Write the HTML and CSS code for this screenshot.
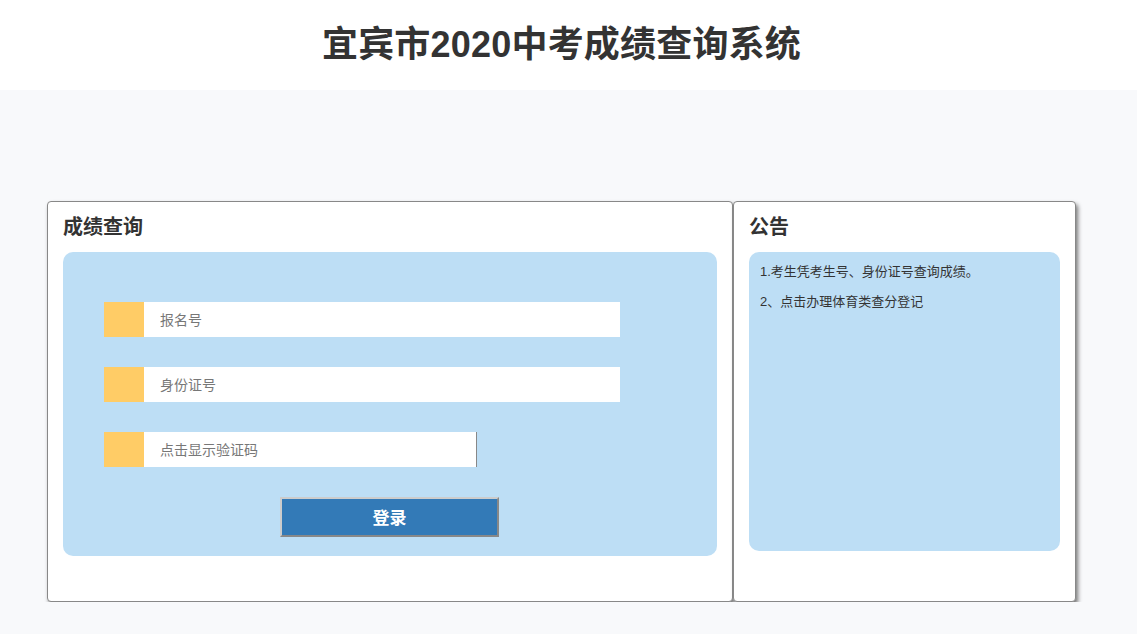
FILE: index.html
```html
<!DOCTYPE html>
<html lang="zh-CN">
<head>
    <meta charset="UTF-8">
    <title>宜宾市2020中考成绩查询系统</title>
    <link rel="stylesheet" href="styles.css">
</head>
<body>

<div class="header">
    <h1>宜宾市2020中考成绩查询系统</h1>
</div>

<div class="main">
    <div class="box box-query">
        <h2>成绩查询</h2>
        <div class="panel">
            <div class="field">
                <span class="mark"></span>
                <input type="text" placeholder="报名号">
            </div>
            <div class="field">
                <span class="mark"></span>
                <input type="text" placeholder="身份证号">
            </div>
            <div class="field">
                <span class="mark"></span>
                <input type="text" class="short" placeholder="点击显示验证码">
            </div>
            <div class="actions">
                <button type="button" class="btn-login">登录</button>
            </div>
        </div>
    </div>

    <div class="box box-notice">
        <h2>公告</h2>
        <div class="panel notice">
            <p>1.考生凭考生号、身份证号查询成绩。</p>
            <p>2、点击办理体育类查分登记</p>
        </div>
    </div>
</div>

</body>
</html>
```

FILE: styles.css
```css
* {
    box-sizing: border-box;
    margin: 0;
    padding: 0;
}
body {
    font-family: "Liberation Sans", "Noto Sans CJK SC", sans-serif;
    background: #f8f9fb;
    color: #333;
}
.header {
    background: #fff;
    height: 90px;
    display: flex;
    align-items: center;
    justify-content: center;
    padding-right: 14px;
}
.header h1 {
    font-size: 36px;
    font-weight: bold;
    letter-spacing: 0.2px;
    color: #333;
    margin-top: -8px;
}
.main {
    display: flex;
    padding: 111px 0 0 47px;
}
.box {
    background: #fff;
    border: 1px solid #888;
    border-radius: 4px;
    box-shadow: 2px 3px 4px #777;
    height: 401px;
    padding: 12px 15px 0;
}
.box h2 {
    font-size: 20px;
    font-weight: bold;
    line-height: 26px;
    margin-bottom: 12px;
}
.box-query {
    width: 686px;
}
.box-notice {
    width: 343px;
}
.panel {
    background: #bddef5;
    border-radius: 10px;
}
.box-query .panel {
    height: 304px;
    padding: 50px 0 0 41px;
}
.field {
    display: flex;
    height: 35px;
    margin-bottom: 30px;
}
.mark {
    width: 40px;
    background: #ffcc66;
}
.field input {
    width: 476px;
    height: 35px;
    border: none;
    outline: none;
    background: #fff;
    padding-left: 16px;
    font-family: "Liberation Sans", "Noto Sans CJK SC", sans-serif;
    font-size: 14px;
    color: #333;
}
.field input::placeholder {
    color: #777;
}
.field input.short {
    width: 333px;
    border-right: 1px solid #888;
}
.actions {
    padding-left: 176px;
}
.btn-login {
    width: 219px;
    height: 40px;
    background: #337ab7;
    color: #fff;
    font-family: "Liberation Sans", "Noto Sans CJK SC", sans-serif;
    font-size: 17px;
    font-weight: bold;
    border: 2px solid;
    border-color: #ccc #888 #888 #ccc;
    padding-bottom: 2px;
    cursor: pointer;
}
.notice {
    height: 299px;
    padding: 11px 10px 0 11px;
    font-size: 13px;
}
.notice p {
    line-height: 18px;
    margin-bottom: 12px;
}
```
